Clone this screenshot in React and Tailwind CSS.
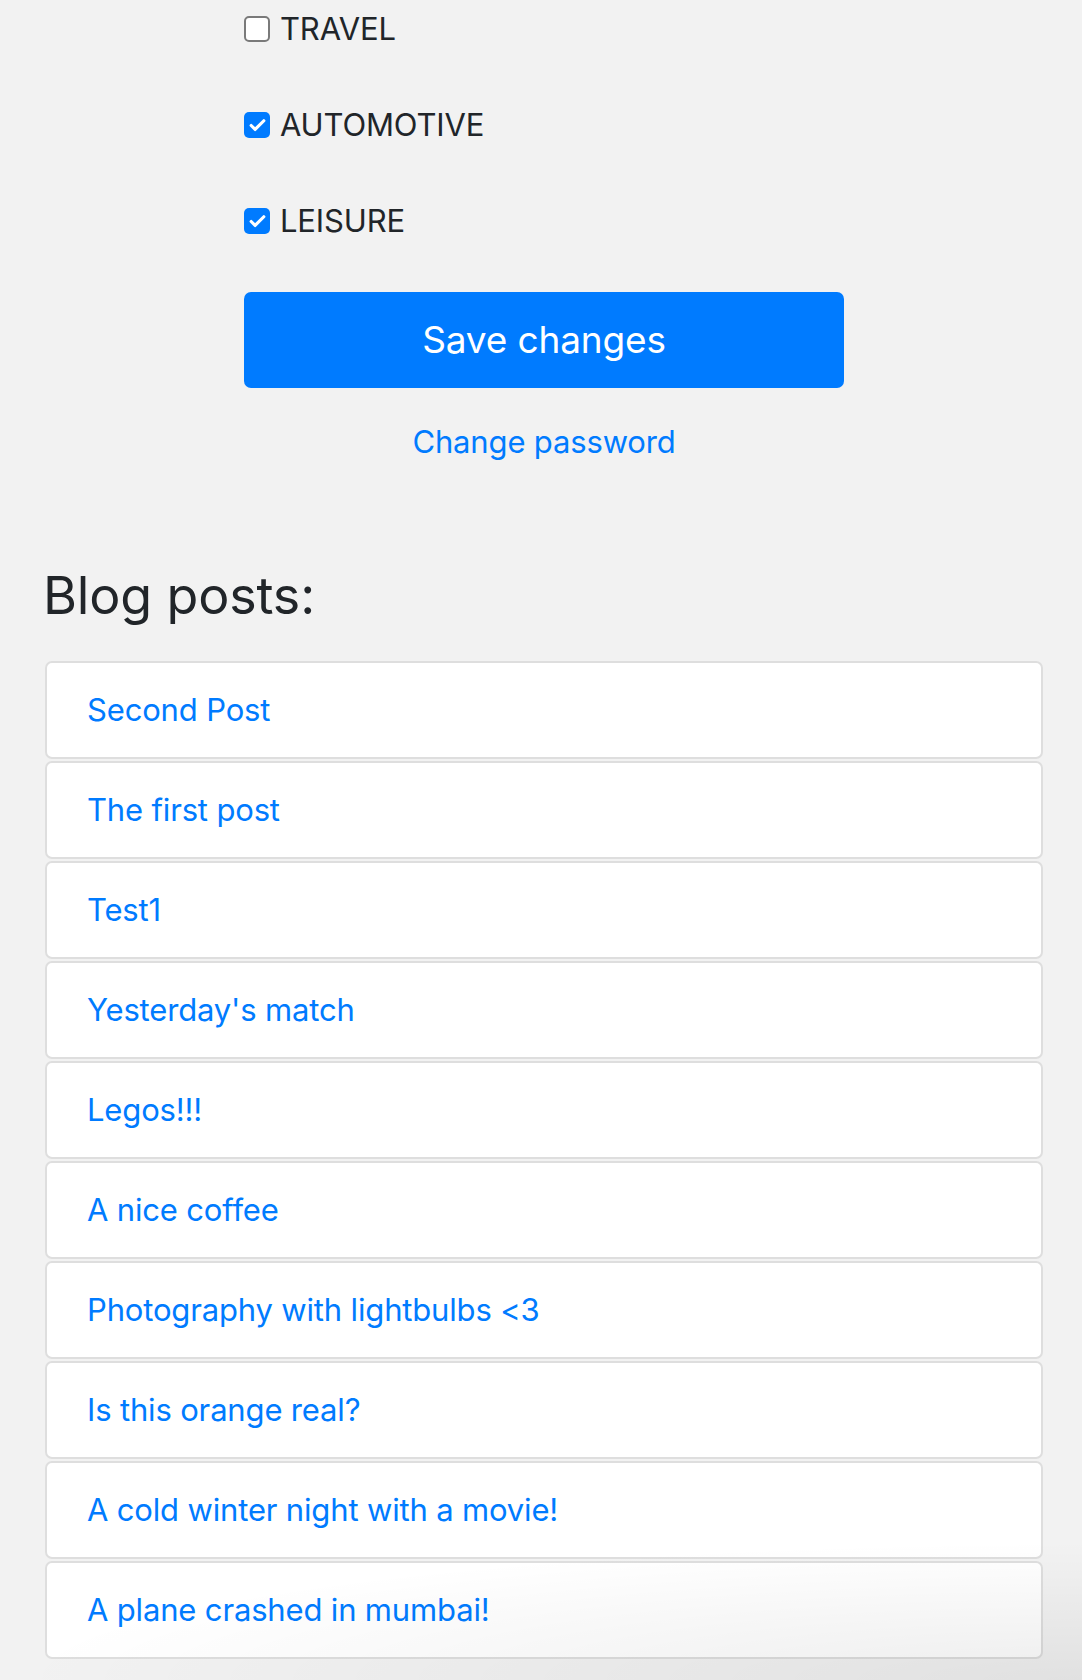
import { Check } from 'lucide-react';

const TOPICS = [
  { label: 'TRAVEL', checked: false },
  { label: 'AUTOMOTIVE', checked: true },
  { label: 'LEISURE', checked: true },
];

const POSTS = [
  'Second Post',
  'The first post',
  'Test1',
  "Yesterday's match",
  'Legos!!!',
  'A nice coffee',
  'Photography with lightbulbs <3',
  'Is this orange real?',
  'A cold winter night with a movie!',
  'A plane crashed in mumbai!',
];

function TopicCheckbox({ label, checked }) {
  return (
    <label className="flex h-[46px] items-center gap-[10px]">
      {checked ? (
        <span className="flex h-[26px] w-[26px] items-center justify-center rounded-[5px] bg-[#007bff]">
          <Check className="h-[19px] w-[19px] text-white" strokeWidth={4} />
        </span>
      ) : (
        <span className="h-[26px] w-[26px] rounded-[5px] border-2 border-[#7a7a7a] bg-white" />
      )}
      <span className="text-[31px] leading-[46px] text-[#212529]">{label}</span>
    </label>
  );
}

export default function App() {
  return (
    <div className="relative min-h-[1680px] overflow-hidden bg-[#f2f2f2] font-['Inter',sans-serif] tracking-[-0.01em] text-[#212529]">
      {/* Settings form */}
      <div className="ml-[244px] w-[600px] pt-[6px]">
        <div className="flex flex-col gap-[50px]">
          {TOPICS.map((t) => (
            <TopicCheckbox key={t.label} {...t} />
          ))}
        </div>

        <button className="mt-[48px] flex h-[96px] w-[600px] items-center justify-center rounded-[7px] bg-[#007bff] text-[37px] text-white">
          Save changes
        </button>

        <div className="mt-[31px] text-center text-[31px] leading-[46px] text-[#007bff]">
          Change password
        </div>
      </div>

      {/* Blog posts */}
      <div className="ml-[45px] w-[998px] pt-[100px]">
        <h3 className="-ml-[2px] text-[52px] leading-[62px] text-[#212529]">Blog posts:</h3>

        <div className="mt-[34px] flex flex-col gap-[2px]">
          {POSTS.map((p) => (
            <div
              key={p}
              className="flex h-[98px] items-center rounded-[7px] border-2 border-[#dedede] bg-white px-[40px]"
            >
              <span className="text-[31px] leading-[46px] text-[#007bff]">{p}</span>
            </div>
          ))}
        </div>
      </div>

      {/* window shadow at bottom */}
      <div className="pointer-events-none absolute bottom-0 left-0 right-0 h-[140px] bg-[radial-gradient(ellipse_at_bottom_right,rgba(0,0,0,0.07),transparent_70%)]" />
    </div>
  );
}
